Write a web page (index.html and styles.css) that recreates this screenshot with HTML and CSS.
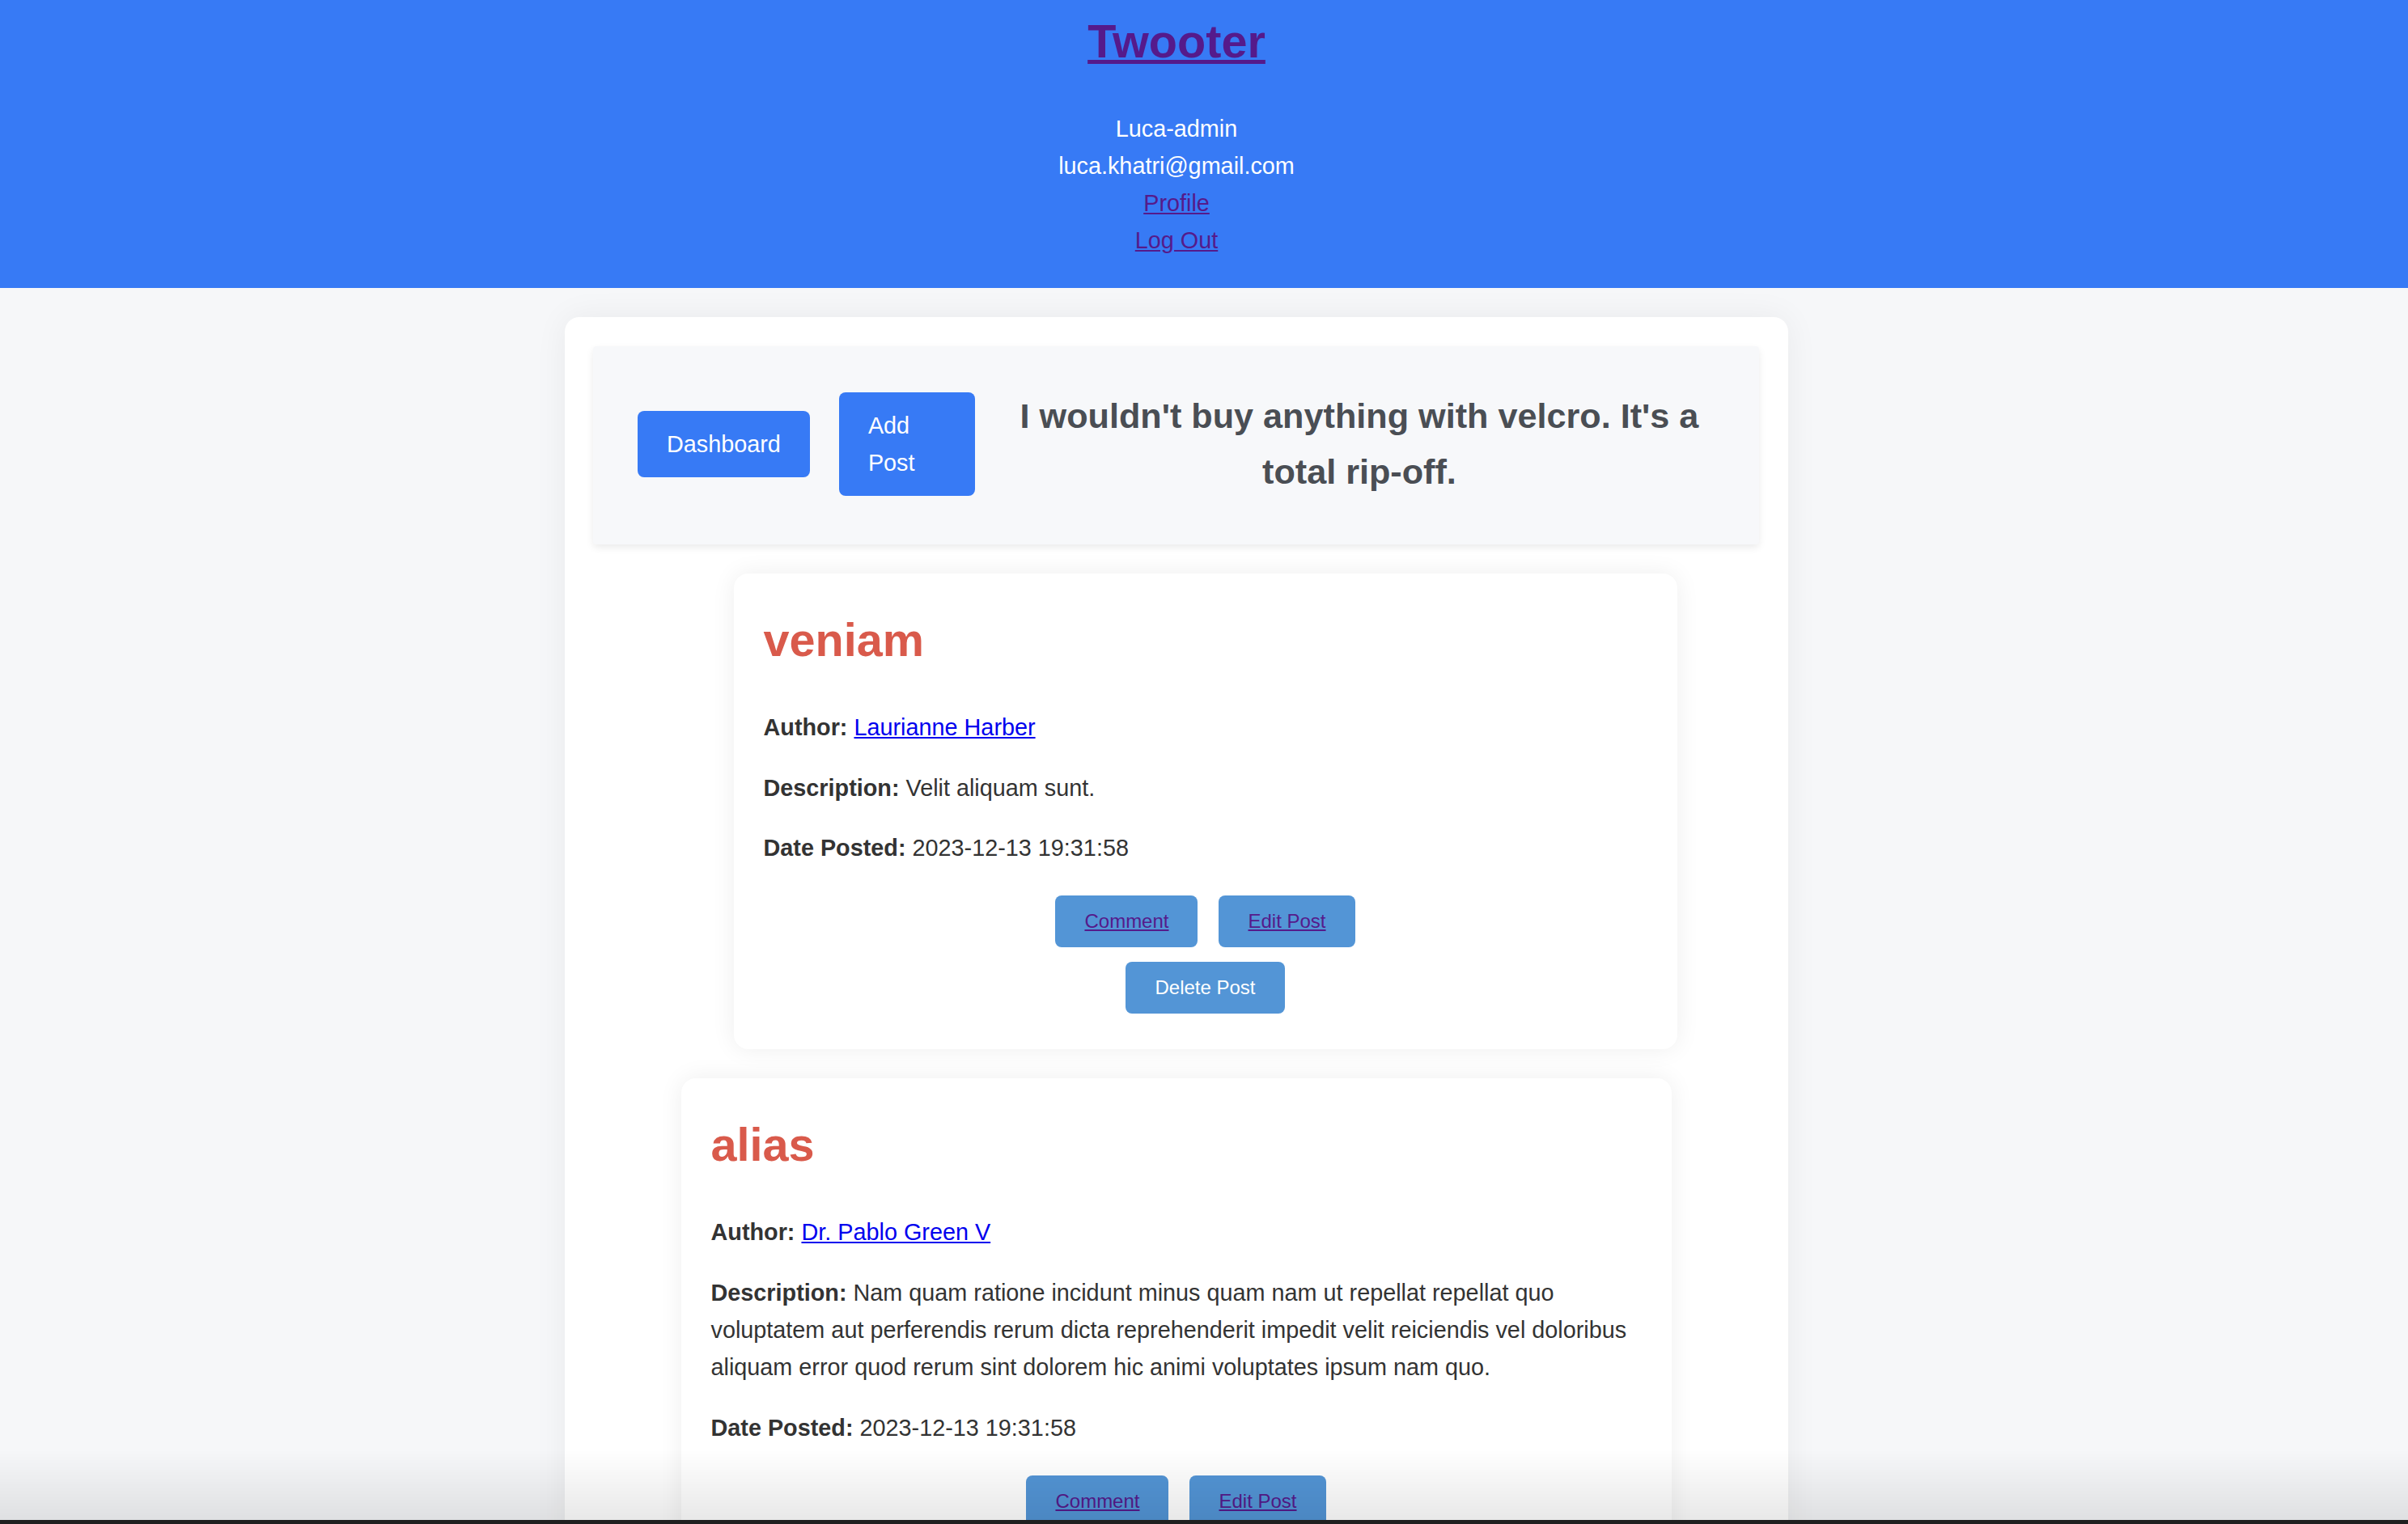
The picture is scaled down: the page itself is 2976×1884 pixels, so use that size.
FILE: index.html
```html
<!DOCTYPE html>
<html lang="en">
<head>
<meta charset="utf-8">
<title>Twooter</title>
<link rel="stylesheet" href="styles.css">
</head>
<body>
<header class="site-header">
  <h1 class="brand"><a href="#" class="link-visited">Twooter</a></h1>
  <div class="user-info">
    <div class="user-line">Luca-admin</div>
    <div class="user-line">luca.khatri@gmail.com</div>
    <div class="user-line"><a href="#" class="link-visited">Profile</a></div>
    <div class="user-line"><a href="#" class="link-visited">Log Out</a></div>
  </div>
</header>
<div class="page">
  <main class="main-card">
    <section class="toolbar">
      <a href="#" class="btn-primary">Dashboard</a>
      <a href="#" class="btn-primary btn-add">Add Post</a>
      <h2 class="quote">I wouldn't buy anything with velcro. It's a total rip-off.</h2>
    </section>
    <div class="posts">
      <article class="post post-a">
        <h2 class="post-title">veniam</h2>
        <p class="post-field"><strong>Author:</strong> <a href="#" class="link-author">Laurianne Harber</a></p>
        <p class="post-field"><strong>Description:</strong> Velit aliquam sunt.</p>
        <p class="post-field"><strong>Date Posted:</strong> 2023-12-13 19:31:58</p>
        <div class="actions">
          <div class="action-row">
            <a href="#" class="action action-link">Comment</a>
            <a href="#" class="action action-link">Edit Post</a>
          </div>
          <div class="action-row">
            <button type="button" class="action action-button">Delete Post</button>
          </div>
        </div>
      </article>
      <article class="post post-b">
        <h2 class="post-title">alias</h2>
        <p class="post-field"><strong>Author:</strong> <a href="#" class="link-author">Dr. Pablo Green V</a></p>
        <p class="post-field"><strong>Description:</strong> Nam quam ratione incidunt minus quam nam ut repellat repellat quo voluptatem aut perferendis rerum dicta reprehenderit impedit velit reiciendis vel doloribus aliquam error quod rerum sint dolorem hic animi voluptates ipsum nam quo.</p>
        <p class="post-field"><strong>Date Posted:</strong> 2023-12-13 19:31:58</p>
        <div class="actions">
          <div class="action-row">
            <a href="#" class="action action-link">Comment</a>
            <a href="#" class="action action-link">Edit Post</a>
          </div>
          <div class="action-row">
            <button type="button" class="action action-button">Delete Post</button>
          </div>
        </div>
      </article>
    </div>
  </main>
</div>
</body>
</html>
```

FILE: styles.css
```css
* {
  box-sizing: border-box;
}

html,
body {
  margin: 0;
  padding: 0;
}

body {
  font-family: "Liberation Sans", Arial, Helvetica, sans-serif;
  font-size: 28.8px;
  line-height: 1.6;
  color: #333333;
  background: #f6f7f9;
}

body::after {
  content: "";
  position: fixed;
  left: 0;
  right: 0;
  bottom: 0;
  height: 92px;
  pointer-events: none;
  background: linear-gradient(to bottom, rgba(0, 0, 0, 0) 0, rgba(0, 0, 0, 0.09) 87px, #1f1f1f 87px, #1f1f1f 100%);
}

.link-visited {
  color: #551a8b;
  text-decoration: underline;
}

/* Header */
.site-header {
  background: #377af5;
  color: #ffffff;
  text-align: center;
  padding: 5px 68px 36px 0;
}

.brand {
  margin: 0 0 38.6px;
  font-size: 57.6px;
  line-height: 1.6;
  font-weight: bold;
}

.user-line {
  line-height: 46px;
}

/* Page */
.page {
  width: 2908px;
  padding-top: 36px;
}

.main-card {
  display: block;
  width: 1512px;
  margin: 0 auto;
  padding: 36px 36px 36px 35px;
  background: #ffffff;
  border-radius: 18px;
  box-shadow: 0 0 40px rgba(0, 0, 0, 0.06);
}

/* Toolbar */
.toolbar {
  display: flex;
  align-items: center;
  gap: 36px;
  padding: 52px 55px 55px;
  background: #f7f8fa;
  border-radius: 4px;
  box-shadow: 0 4px 10px rgba(0, 0, 0, 0.08);
}

.btn-primary {
  flex: none;
  display: block;
  padding: 18px 36px;
  line-height: 46px;
  background: #377af5;
  color: #ffffff;
  text-decoration: none;
  border-radius: 8px;
}

.btn-add {
  width: 168px;
}

.quote {
  flex: 1;
  margin: 0;
  font-size: 43.2px;
  line-height: 1.6;
  font-weight: bold;
  text-align: center;
  color: #4a4e54;
}

/* Posts */
.posts {
  display: flex;
  flex-direction: column;
  align-items: center;
  gap: 36px;
  margin-top: 36px;
}

.post {
  background: #ffffff;
  border-radius: 18px;
  box-shadow: 0 0 30px rgba(0, 0, 0, 0.07);
  padding: 36px 37px 44px;
}

.post-a {
  width: 1166px;
  margin-left: 72px;
}

.post-b {
  width: 1224px;
}

.post-title {
  margin: 0 0 38.6px;
  font-size: 57.6px;
  line-height: 1.6;
  font-weight: bold;
  color: #d95a4b;
}

.post-field {
  margin: 28.8px 0;
  line-height: 46px;
}

.post-field strong {
  font-weight: bold;
}

.link-author {
  color: #0000ee;
  text-decoration: underline;
}

.actions {
  display: flex;
  flex-direction: column;
  align-items: center;
  gap: 18px;
  margin-top: 36px;
}

.action-row {
  display: flex;
  justify-content: center;
  gap: 26px;
}

.action {
  display: block;
  padding: 13px 36px;
  font-family: "Liberation Sans", Arial, Helvetica, sans-serif;
  font-size: 24px;
  line-height: 38px;
  background: #5395d6;
  border: none;
  border-radius: 8px;
}

.action-link {
  color: #551a8b;
  text-decoration: underline;
}

.action-button {
  color: #ffffff;
  cursor: pointer;
}
```
